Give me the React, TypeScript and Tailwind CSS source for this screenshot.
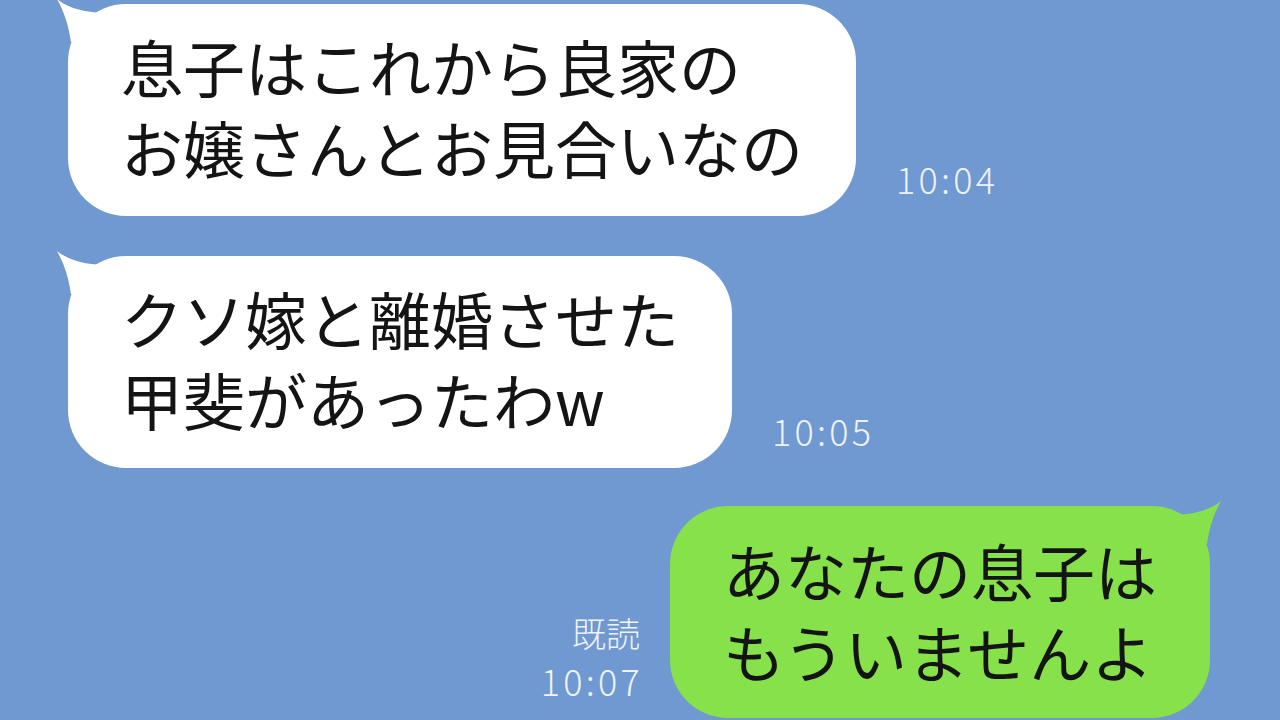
const jp = { fontFamily: '"Noto Sans CJK JP", "Noto Sans", sans-serif' };

type Side = 'left' | 'right';

const Tail = ({ side, color }: { side: Side; color: string }) => {
  const pos = side === 'left' ? 'left-[-12px] top-[-6px]' : 'right-[-12px] top-[-6px] -scale-x-100';
  return (
    <svg
      className={`absolute ${pos}`}
      width="48"
      height="46"
      viewBox="0 0 48 46"
    >
      <path d="M1 1 C 7 12 12 24 15 44 L 46 44 L 46 15 C 30 14 13 11 1 1 Z" fill={color} />
    </svg>
  );
};

const Bubble = ({
  lines,
  side,
  className,
}: {
  lines: string[];
  side: Side;
  className: string;
}) => {
  const fill = side === 'left' ? '#ffffff' : '#86e14b';
  return (
    <div className={`relative rounded-[58px] px-[53px] ${className}`}>
      <Tail side={side} color={fill} />
      <div className="relative text-[62px] leading-[81px] text-[#141414] whitespace-nowrap">
        {lines.map((l) => (
          <div key={l}>{l}</div>
        ))}
      </div>
    </div>
  );
};

const Time = ({ children, className = '' }: { children: React.ReactNode; className?: string }) => (
  <div className={`text-[36px] leading-none font-light tracking-[0.09em] text-[#eef3fb] ${className}`}>
    {children}
  </div>
);

export default function App() {
  return (
    <div className="w-[1280px] h-[720px] overflow-hidden bg-[#7098d1] flex flex-col" style={jp}>
      <div className="mt-[4px] ml-[68px] flex items-end gap-[40px]">
        <Bubble
          side="left"
          className="bg-white pt-[22px] pb-[28px]"
          lines={['息子はこれから良家の', 'お嬢さんとお見合いなの']}
        />
        <Time className="mb-[20px]">10:04</Time>
      </div>

      <div className="mt-[40px] ml-[68px] flex items-end gap-[40px]">
        <Bubble
          side="left"
          className="bg-white pt-[22px] pb-[28px]"
          lines={['クソ嫁と離婚させた', '甲斐があったわw']}
        />
        <Time className="mb-[20px]">10:05</Time>
      </div>

      <div className="mt-[38px] mr-[70px] flex items-end justify-end gap-[28px]">
        <div className="mb-[20px] flex flex-col items-end gap-[12px]">
          <div className="text-[34px] leading-none font-light text-[#eef3fb] mr-[2px]">既読</div>
          <Time className="-mr-[1px]">10:07</Time>
        </div>
        <Bubble
          side="right"
          className="bg-[#86e14b] pt-[24px] pb-[26px]"
          lines={['あなたの息子は', 'もういませんよ']}
        />
      </div>
    </div>
  );
}
